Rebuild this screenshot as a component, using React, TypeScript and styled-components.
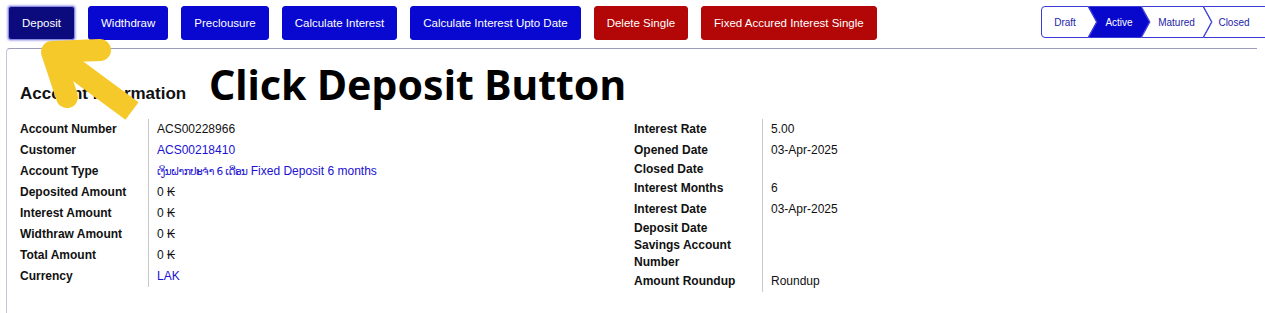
import React from "react";
import styled, { createGlobalStyle } from "styled-components";

const GlobalStyle = createGlobalStyle`
  html, body {
    margin: 0;
    padding: 0;
    background: #ffffff;
  }
  body {
    font-family: "Liberation Sans", "DejaVu Sans", Arial, sans-serif;
    color: #111111;
  }
`;

const Page = styled.div`
  position: relative;
  display: flex;
  flex-direction: column;
  width: 1265px;
  height: 313px;
  overflow: hidden;
`;

const Toolbar = styled.div`
  display: flex;
  align-items: flex-start;
  padding: 6px 8px 0 8px;
  height: 48px;
  box-sizing: border-box;
`;

const ButtonGroup = styled.div`
  display: flex;
  gap: 13px;
`;

const ActionButton = styled.button<{ $variant: "primary" | "danger" | "active" }>`
  height: 34px;
  padding: 0 ${(p) => (p.$variant === "active" ? 13 : 12)}px;
  border-radius: 3px;
  font-family: "Liberation Sans", Arial, sans-serif;
  font-size: 11.5px;
  color: #ffffff;
  cursor: pointer;
  border: 1px solid
    ${(p) => (p.$variant === "active" ? "#8a8ae6" : p.$variant === "danger" ? "#b30606" : "#0808d0")};
  background: ${(p) => (p.$variant === "active" ? "#0b0b7e" : p.$variant === "danger" ? "#b30606" : "#0808d0")};
  box-shadow: ${(p) => (p.$variant === "active" ? "0 0 2px 1px #b8b8ee" : "none")};
`;

const Stepper = styled.div`
  display: flex;
  margin-left: auto;
  margin-right: -8px;
  width: 224px;
  overflow: hidden;
`;

const StepItem = styled.div<{ $w: number; $first?: boolean; $active?: boolean }>`
  position: relative;
  flex: 0 0 ${(p) => p.$w}px;
  height: 32px;
  margin-left: ${(p) => (p.$first ? 0 : -9)}px;
  display: flex;
  align-items: center;
  justify-content: center;
  padding-left: ${(p) => (p.$first ? 0 : 8)}px;
  padding-right: 8px;
  box-sizing: border-box;
  font-family: "Liberation Sans", Arial, sans-serif;
  font-size: 10px;
  color: ${(p) => (p.$active ? "#ffffff" : "#2424a8")};

  svg {
    position: absolute;
    inset: 0;
    z-index: 0;
  }
  span {
    position: relative;
    z-index: 1;
  }
`;

const Panel = styled.div`
  flex: 1;
  margin-left: 6px;
  margin-right: 8px;
  border-top: 1px solid #9d9dbd;
  border-left: 1px solid #c4c4dc;
  border-top-left-radius: 4px;
  padding: 35px 0 0 13px;
`;

const Heading = styled.h2`
  margin: 0 0 15px 0;
  font-family: "Liberation Sans", Arial, sans-serif;
  font-size: 17px;
  line-height: 20px;
  font-weight: 700;
  color: #111111;
`;

const Columns = styled.div`
  display: grid;
  grid-template-columns: 614px 1fr;
`;

const InfoTable = styled.div`
  display: grid;
  grid-template-columns: 128px 1fr;
  align-content: start;
`;

const Label = styled.div`
  font-size: 12px;
  line-height: 17px;
  font-weight: 700;
  color: #111111;
  padding: 2px 8px 2px 0;
  &.compact {
    padding: 0 8px 0 0;
  }
`;

const Value = styled.div<{ $link?: boolean }>`
  font-size: 12px;
  line-height: 17px;
  padding: 2px 0 2px 8px;
  border-left: 1px solid #c8c8c8;
  color: ${(p) => (p.$link ? "#2010d2" : "#111111")};
  font-family: "Liberation Sans", "DejaVu Sans", sans-serif;
  &.compact {
    padding: 0 0 0 8px;
  }
`;

const LaoText = styled.span`
  font-family: "DejaVu Sans", sans-serif;
  font-size: 10.5px;
  letter-spacing: -0.6px;
`;

const Annotation = styled.div`
  position: absolute;
  left: 209px;
  top: 57px;
  font-family: "Noto Sans", "Open Sans", sans-serif;
  font-weight: 700;
  font-size: 41px;
  line-height: 54px;
  color: #000000;
  white-space: nowrap;
  pointer-events: none;
`;

const ArrowOverlay = styled.svg`
  position: absolute;
  left: 0;
  top: 0;
  pointer-events: none;
`;

type Row = { label: string; value?: React.ReactNode; link?: boolean };

const leftRows: Row[] = [
  { label: "Account Number", value: "ACS00228966" },
  { label: "Customer", value: "ACS00218410", link: true },
  {
    label: "Account Type",
    value: (
      <>
        <LaoText>ເງິນຝາກປະຈຳ 6 ເດືອນ</LaoText> Fixed Deposit 6 months
      </>
    ),
    link: true,
  },
  { label: "Deposited Amount", value: "0 ₭" },
  { label: "Interest Amount", value: "0 ₭" },
  { label: "Widthraw Amount", value: "0 ₭" },
  { label: "Total Amount", value: "0 ₭" },
  { label: "Currency", value: "LAK", link: true },
];

const rightRows: Row[] = [
  { label: "Interest Rate", value: "5.00" },
  { label: "Opened Date", value: "03-Apr-2025" },
  { label: "Closed Date" },
  { label: "Interest Months", value: "6" },
  { label: "Interest Date", value: "03-Apr-2025" },
  { label: "Deposit Date" },
  { label: "Savings Account Number" },
  { label: "Amount Roundup", value: "Roundup" },
];

const buttons: { text: string; variant: "primary" | "danger" | "active" }[] = [
  { text: "Deposit", variant: "active" },
  { text: "Widthdraw", variant: "primary" },
  { text: "Preclousure", variant: "primary" },
  { text: "Calculate Interest", variant: "primary" },
  { text: "Calculate Interest Upto Date", variant: "primary" },
  { text: "Delete Single", variant: "danger" },
  { text: "Fixed Accured Interest Single", variant: "danger" },
];

const steps = [
  { name: "Draft", w: 56, kind: "first" },
  { name: "Active", w: 62, kind: "mid", active: true },
  { name: "Matured", w: 71, kind: "mid" },
  { name: "Closed", w: 62, kind: "last" },
];

const stepPath = (kind: string, w: number) => {
  const d = 9;
  if (kind === "first") return `M4,0.5 H${w - d} L${w - 0.5},16 L${w - d},31.5 H4 Q0.5,31.5 0.5,28 V4 Q0.5,0.5 4,0.5 Z`;
  if (kind === "last") return `M${w},0.5 H0.5 L${d},16 L0.5,31.5 H${w}`;
  return `M0.5,0.5 H${w - d} L${w - 0.5},16 L${w - d},31.5 H0.5 L${d},16 Z`;
};

const InfoRows = ({ rows }: { rows: Row[] }) => (
  <InfoTable>
    {rows.map((r) => (
      <React.Fragment key={r.label}>
        <Label className={r.value ? "" : "compact"}>{r.label}</Label>
        <Value className={r.value ? "" : "compact"} $link={r.link}>
          {r.value}
        </Value>
      </React.Fragment>
    ))}
  </InfoTable>
);

const App = () => {
  return (
    <Page>
      <GlobalStyle />
      <Toolbar>
        <ButtonGroup>
          {buttons.map((b) => (
            <ActionButton key={b.text} $variant={b.variant}>
              {b.text}
            </ActionButton>
          ))}
        </ButtonGroup>
        <Stepper>
          {steps.map((s, i) => (
            <StepItem key={s.name} $w={s.w} $first={i === 0} $active={s.active}>
              <svg width={s.w} height={32} viewBox={`0 0 ${s.w} 32`}>
                <path
                  d={stepPath(s.kind, s.w)}
                  fill={s.active ? "#0808cc" : "#ffffff"}
                  stroke="#3a3ad8"
                  strokeWidth={1}
                />
              </svg>
              <span>{s.name}</span>
            </StepItem>
          ))}
        </Stepper>
      </Toolbar>

      <Panel>
        <Heading>Account Information</Heading>
        <Columns>
          <InfoRows rows={leftRows} />
          <InfoRows rows={rightRows} />
        </Columns>
      </Panel>

      <Annotation>Click Deposit Button</Annotation>

      <ArrowOverlay width={200} height={140} viewBox="0 0 200 140">
        <g stroke="#f6c92a" strokeWidth={22} fill="none" strokeLinejoin="round">
          <path d="M100,50 L52,52 L67,97" strokeLinecap="round" />
          <path d="M52,52 L132,111" strokeLinecap="butt" />
        </g>
      </ArrowOverlay>
    </Page>
  );
};

export default App;
